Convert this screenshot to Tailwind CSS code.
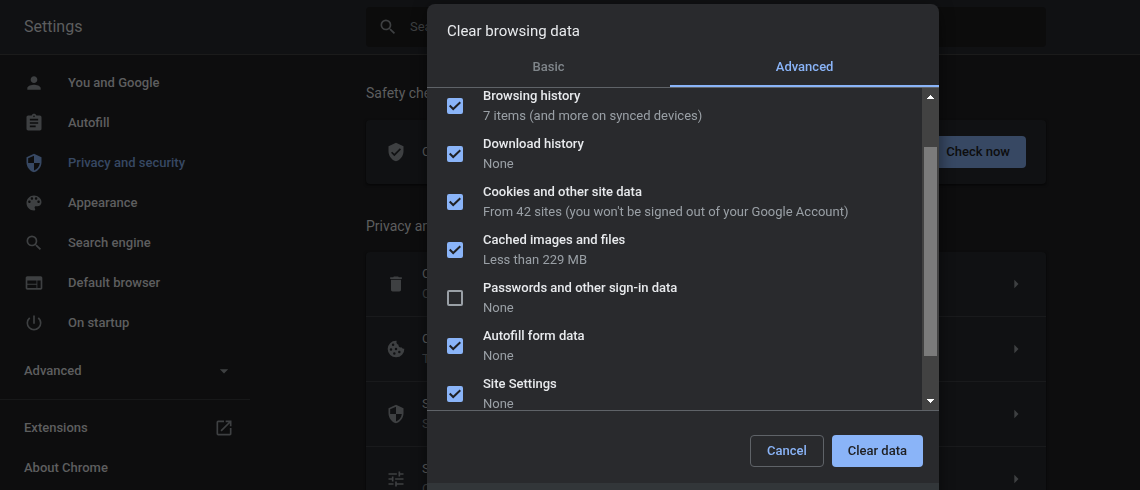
<!DOCTYPE html>
<html lang="en">
<head>
<meta charset="utf-8">
<title>Settings - Privacy and security</title>
<script src="https://cdn.jsdelivr.net/npm/@tailwindcss/browser@4"></script>
</head>
<body class="h-screen overflow-hidden bg-[#0d0d0e] font-['Roboto',sans-serif] text-[13px] leading-5 text-[#5d5e5f]">

<header class="flex h-[55px] border-b border-[#1b1b1b] bg-[#101113]">
  <h1 class="flex w-68 shrink-0 items-center pl-6 text-base">Settings</h1>
  <div class="flex flex-1 items-center justify-center">
    <label class="flex h-10 w-full max-w-[680px] items-center gap-3 rounded bg-[#0c0c0c] pl-3">
      <svg class="size-5 fill-[#3e4042]" viewBox="0 0 24 24"><path d="M15.5 14h-.79l-.28-.27A6.471 6.471 0 0 0 16 9.5 6.5 6.5 0 1 0 9.5 16c1.61 0 3.09-.59 4.23-1.57l.27.28v.79l5 4.99L20.49 19l-4.99-5zm-6 0C7.01 14 5 11.99 5 9.5S7.01 5 9.5 5 14 7.01 14 9.5 11.99 14 9.5 14z"/></svg>
      <input type="search" aria-label="Search settings" placeholder="Search settings" class="flex-1 bg-transparent outline-none placeholder:text-[#3e4042]">
    </label>
  </div>
</header>

<div class="flex">
  <nav class="w-68 shrink-0 pt-2 font-medium">
    <ul>
      <li><a href="#people" class="flex h-10 items-center gap-6 pl-6"><svg class="size-5 fill-[#3e4042]" viewBox="0 0 24 24"><path d="M12 12c2.21 0 4-1.79 4-4s-1.79-4-4-4-4 1.79-4 4 1.79 4 4 4zm0 2c-2.67 0-8 1.34-8 4v2h16v-2c0-2.66-5.33-4-8-4z"/></svg>You and Google</a></li>
      <li><a href="#autofill" class="flex h-10 items-center gap-6 pl-6"><svg class="size-5 fill-[#3e4042]" viewBox="0 0 24 24"><path d="M19 3h-4.18C14.4 1.84 13.3 1 12 1s-2.4.84-2.82 2H5c-1.1 0-2 .9-2 2v14c0 1.1.9 2 2 2h14c1.1 0 2-.9 2-2V5c0-1.1-.9-2-2-2zm-7 0c.55 0 1 .45 1 1s-.45 1-1 1-1-.45-1-1 .45-1 1-1zm2 14H7v-2h7v2zm3-4H7v-2h10v2zm0-4H7V7h10v2z"/></svg>Autofill</a></li>
      <li><a href="#privacy" aria-current="page" class="flex h-10 items-center gap-6 pl-6 text-[#374863]"><svg class="size-5 fill-[#374863]" viewBox="0 0 24 24"><path d="M12 1L3 5v6c0 5.55 3.84 10.74 9 12 5.16-1.26 9-6.45 9-12V5l-9-4zm0 10.99h7c-.53 4.12-3.28 7.79-7 8.94V12H5V6.3l7-3.11v8.8z"/></svg>Privacy and security</a></li>
      <li><a href="#appearance" class="flex h-10 items-center gap-6 pl-6"><svg class="size-5 fill-[#3e4042]" viewBox="0 0 24 24"><path d="M12 3c-4.97 0-9 4.03-9 9s4.03 9 9 9c.83 0 1.5-.67 1.5-1.5 0-.39-.15-.74-.39-1.01-.23-.26-.38-.61-.38-.99 0-.83.67-1.5 1.5-1.5H16c2.76 0 5-2.24 5-5 0-4.42-4.03-8-9-8zm-5.5 9c-.83 0-1.5-.67-1.5-1.5S5.67 9 6.500 9 8 9.670 8 10.500 7.330 12 6.500 12zm3-4C8.670 8 8 7.330 8 6.500S8.670 5 9.500 5s1.500.670 1.500 1.500S10.330 8 9.500 8zm5 0c-.83 0-1.500-.67-1.500-1.500S13.670 5 14.500 5s1.500.670 1.500 1.500S15.330 8 14.500 8zm3 4c-.83 0-1.500-.67-1.500-1.500S16.670 9 17.500 9s1.500.670 1.500 1.500-.67 1.500-1.500 1.500z"/></svg>Appearance</a></li>
      <li><a href="#search" class="flex h-10 items-center gap-6 pl-6"><svg class="size-5 fill-[#3e4042]" viewBox="0 0 24 24"><path d="M15.5 14h-.79l-.28-.27A6.471 6.471 0 0 0 16 9.5 6.5 6.5 0 1 0 9.5 16c1.61 0 3.09-.59 4.23-1.57l.27.28v.79l5 4.99L20.49 19l-4.99-5zm-6 0C7.01 14 5 11.99 5 9.5S7.01 5 9.5 5 14 7.01 14 9.5 11.99 14 9.5 14z"/></svg>Search engine</a></li>
      <li><a href="#default" class="flex h-10 items-center gap-6 pl-6"><svg class="size-5 fill-[#3e4042]" viewBox="0 0 24 24"><path d="M20 4H4c-1.1 0-1.990.9-1.990 2L2 18c0 1.100.9 2 2 2h16c1.100 0 2-.9 2-2V6c0-1.100-.9-2-2-2zm-5 14H4v-4h11v4zm0-5H4V9h11v4zm5 5h-4V9h4v9z"/></svg>Default browser</a></li>
      <li><a href="#startup" class="flex h-10 items-center gap-6 pl-6"><svg class="size-5 fill-[#3e4042]" viewBox="0 0 24 24"><path d="M13 3h-2v10h2V3zm4.830 2.170l-1.420 1.420A6.920 6.920 0 0 1 19 12c0 3.870-3.130 7-7 7s-7-3.130-7-7c0-2.190 1.010-4.140 2.580-5.420L6.170 5.170A8.932 8.932 0 0 0 3 12a9 9 0 0 0 18 0c0-2.740-1.230-5.180-3.170-6.830z"/></svg>On startup</a></li>
    </ul>
    <button type="button" class="mt-2 flex h-10 w-[234px] items-center justify-between pl-6 font-medium">Advanced<svg class="size-5 fill-[#3e4042]" viewBox="0 0 24 24"><path d="M7 10l5 5 5-5z"/></svg></button>
    <hr class="mt-2 mb-2 w-[250px] border-[#171819]">
    <a href="#extensions" class="flex h-10 w-[234px] items-center justify-between pl-6">Extensions<svg class="size-5 fill-[#3e4042]" viewBox="0 0 24 24"><path d="M19 19H5V5h7V3H5a2 2 0 0 0-2 2v14a2 2 0 0 0 2 2h14c1.100 0 2-.9 2-2v-7h-2v7zM14 3v2h3.590l-9.830 9.830 1.410 1.410L19 6.410V10h2V3h-7z"/></svg></a>
    <a href="#about" class="flex h-10 items-center pl-6">About Chrome</a>
  </nav>

  <main class="flex flex-1 justify-center">
    <div class="w-full max-w-[680px]">
      <h2 class="pt-7 pb-[17px] text-sm">Safety check</h2>
      <section class="flex h-16 items-center gap-4 rounded bg-[#101113] px-5 shadow-sm shadow-black/50">
        <svg class="size-5 fill-[#3e4042]" viewBox="0 0 24 24"><path d="M12 1L3 5v6c0 5.550 3.840 10.740 9 12 5.160-1.260 9-6.450 9-12V5l-9-4zm-2 16l-4-4 1.410-1.410L10 14.170l6.590-6.590L18 9l-8 8z"/></svg>
        <p class="flex-1">Chrome can help keep you safe from data breaches, bad extensions, and more</p>
        <button type="button" class="h-8 rounded bg-[#374863] px-4 font-medium text-[#0d0d0e]">Check now</button>
      </section>
      <h2 class="pt-8 pb-4 text-sm">Privacy and security</h2>
      <ul class="divide-y divide-[#191a1c] rounded bg-[#101113] shadow-sm shadow-black/50">
        <li><a href="#clear" class="flex h-16 items-center gap-4 px-5"><svg class="size-5 fill-[#3e4042]" viewBox="0 0 24 24"><path d="M6 19c0 1.100.9 2 2 2h8c1.100 0 2-.9 2-2V7H6v12zM19 4h-3.500l-1-1h-5l-1 1H5v2h14V4z"/></svg><span class="flex-1">Clear browsing data<span class="block text-[#3e4042]">Clear history, cookies, cache, and more</span></span><svg class="size-5 fill-[#3e4042]" viewBox="0 0 24 24"><path d="M10 17l5-5-5-5z"/></svg></a></li>
        <li><a href="#cookies" class="flex h-16 items-center gap-4 px-5"><svg class="size-5 fill-[#3e4042]" viewBox="0 0 24 24"><path fill-rule="evenodd" d="M12 2a10 10 0 1 0 10 9.600c-1.500.5-3-.2-3.500-1.600-2.300.4-3.800-1-3.500-3.100-2-.5-3-2.300-2.200-4.800zM8.500 5.500a1.500 1.500 0 1 1 0 3 1.500 1.500 0 0 1 0-3zM6 11a1.500 1.500 0 1 1 0 3 1.500 1.500 0 0 1 0-3zm6-.5a1.500 1.500 0 1 1 0 3 1.500 1.500 0 0 1 0-3zM10 16a1.500 1.500 0 1 1 0 3 1.500 1.500 0 0 1 0-3zm6-2a1.500 1.500 0 1 1 0 3 1.500 1.500 0 0 1 0-3z"/></svg><span class="flex-1">Cookies and other site data<span class="block text-[#3e4042]">Third-party cookies are blocked in Incognito mode</span></span><svg class="size-5 fill-[#3e4042]" viewBox="0 0 24 24"><path d="M10 17l5-5-5-5z"/></svg></a></li>
        <li><a href="#security" class="flex h-16 items-center gap-4 px-5"><svg class="size-5 fill-[#3e4042]" viewBox="0 0 24 24"><path d="M12 1L3 5v6c0 5.550 3.840 10.740 9 12 5.160-1.260 9-6.450 9-12V5l-9-4zm0 10.990h7c-.53 4.120-3.280 7.790-7 8.940V12H5V6.300l7-3.110v8.800z"/></svg><span class="flex-1">Security<span class="block text-[#3e4042]">Safe Browsing and other security settings</span></span><svg class="size-5 fill-[#3e4042]" viewBox="0 0 24 24"><path d="M10 17l5-5-5-5z"/></svg></a></li>
        <li><a href="#site" class="flex h-16 items-center gap-4 px-5"><svg class="size-5 fill-[#3e4042]" viewBox="0 0 24 24"><path d="M3 17v2h6v-2H3zM3 5v2h10V5H3zm10 16v-2h8v-2h-8v-2h-2v6h2zM7 9v2H3v2h4v2h2V9H7zm14 4v-2H11v2h10zm-6-4h2V7h4V5h-4V3h-2v6z"/></svg><span class="flex-1">Site Settings<span class="block text-[#3e4042]">Controls what information sites can use and show</span></span><svg class="size-5 fill-[#3e4042]" viewBox="0 0 24 24"><path d="M10 17l5-5-5-5z"/></svg></a></li>
      </ul>
    </div>
  </main>
</div>

<div class="fixed inset-0 flex items-start justify-center overflow-hidden pt-1 pl-[226px]">
  <div role="dialog" aria-modal="true" aria-labelledby="dialog-title" class="w-full max-w-lg overflow-hidden rounded-lg bg-[#292a2d] shadow-[0_0_16px_rgba(0,0,0,0.3),0_16px_16px_rgba(0,0,0,0.24)]">
    <h2 id="dialog-title" class="flex h-11 items-end px-5 pb-[5px] text-[15px] leading-6 text-[#e8eaed]">Clear browsing data</h2>
    <div role="tablist" class="flex h-10 border-b border-[#5f6368] font-medium">
      <button type="button" role="tab" aria-selected="false" class="flex-auto border-b-2 border-transparent text-[#80868b]">Basic</button>
      <button type="button" role="tab" aria-selected="true" class="flex-auto border-b-2 border-[#8ab4f8] text-[#8ab4f8]">Advanced</button>
    </div>
    <div class="flex h-[322px]">
      <div class="flex-1 overflow-hidden px-5 text-[#9aa0a6]">
        <ul class="-mt-1.5">
          <li><label class="flex h-12 items-center gap-5"><span class="grid"><input type="checkbox" checked class="peer col-start-1 row-start-1 size-4 appearance-none rounded-xs border-2 border-[#9aa0a6] checked:border-[#8ab4f8] checked:bg-[#8ab4f8]"><svg class="pointer-events-none invisible col-start-1 row-start-1 size-4 fill-none stroke-[#202124] stroke-2 peer-checked:visible" viewBox="0 0 16 16"><path d="M2.700 7.500L6.200 11L13.300 4.300"/></svg></span><span><span class="block font-medium text-[#e8eaed]">Browsing history</span>7 items (and more on synced devices)</span></label></li>
          <li><label class="flex h-12 items-center gap-5"><span class="grid"><input type="checkbox" checked class="peer col-start-1 row-start-1 size-4 appearance-none rounded-xs border-2 border-[#9aa0a6] checked:border-[#8ab4f8] checked:bg-[#8ab4f8]"><svg class="pointer-events-none invisible col-start-1 row-start-1 size-4 fill-none stroke-[#202124] stroke-2 peer-checked:visible" viewBox="0 0 16 16"><path d="M2.700 7.500L6.200 11L13.300 4.300"/></svg></span><span><span class="block font-medium text-[#e8eaed]">Download history</span>None</span></label></li>
          <li><label class="flex h-12 items-center gap-5"><span class="grid"><input type="checkbox" checked class="peer col-start-1 row-start-1 size-4 appearance-none rounded-xs border-2 border-[#9aa0a6] checked:border-[#8ab4f8] checked:bg-[#8ab4f8]"><svg class="pointer-events-none invisible col-start-1 row-start-1 size-4 fill-none stroke-[#202124] stroke-2 peer-checked:visible" viewBox="0 0 16 16"><path d="M2.700 7.500L6.200 11L13.300 4.300"/></svg></span><span><span class="block font-medium text-[#e8eaed]">Cookies and other site data</span>From 42 sites (you won't be signed out of your Google Account)</span></label></li>
          <li><label class="flex h-12 items-center gap-5"><span class="grid"><input type="checkbox" checked class="peer col-start-1 row-start-1 size-4 appearance-none rounded-xs border-2 border-[#9aa0a6] checked:border-[#8ab4f8] checked:bg-[#8ab4f8]"><svg class="pointer-events-none invisible col-start-1 row-start-1 size-4 fill-none stroke-[#202124] stroke-2 peer-checked:visible" viewBox="0 0 16 16"><path d="M2.700 7.500L6.200 11L13.300 4.300"/></svg></span><span><span class="block font-medium text-[#e8eaed]">Cached images and files</span>Less than 229 MB</span></label></li>
          <li><label class="flex h-12 items-center gap-5"><span class="grid"><input type="checkbox" class="peer col-start-1 row-start-1 size-4 appearance-none rounded-xs border-2 border-[#9aa0a6] checked:border-[#8ab4f8] checked:bg-[#8ab4f8]"><svg class="pointer-events-none invisible col-start-1 row-start-1 size-4 fill-none stroke-[#202124] stroke-2 peer-checked:visible" viewBox="0 0 16 16"><path d="M2.700 7.500L6.200 11L13.300 4.300"/></svg></span><span><span class="block font-medium text-[#e8eaed]">Passwords and other sign-in data</span>None</span></label></li>
          <li><label class="flex h-12 items-center gap-5"><span class="grid"><input type="checkbox" checked class="peer col-start-1 row-start-1 size-4 appearance-none rounded-xs border-2 border-[#9aa0a6] checked:border-[#8ab4f8] checked:bg-[#8ab4f8]"><svg class="pointer-events-none invisible col-start-1 row-start-1 size-4 fill-none stroke-[#202124] stroke-2 peer-checked:visible" viewBox="0 0 16 16"><path d="M2.700 7.500L6.200 11L13.300 4.300"/></svg></span><span><span class="block font-medium text-[#e8eaed]">Autofill form data</span>None</span></label></li>
          <li><label class="flex h-12 items-center gap-5"><span class="grid"><input type="checkbox" checked class="peer col-start-1 row-start-1 size-4 appearance-none rounded-xs border-2 border-[#9aa0a6] checked:border-[#8ab4f8] checked:bg-[#8ab4f8]"><svg class="pointer-events-none invisible col-start-1 row-start-1 size-4 fill-none stroke-[#202124] stroke-2 peer-checked:visible" viewBox="0 0 16 16"><path d="M2.700 7.500L6.200 11L13.300 4.300"/></svg></span><span><span class="block font-medium text-[#e8eaed]">Site Settings</span>None</span></label></li>
        </ul>
      </div>
      <div aria-hidden="true" class="flex w-[17px] shrink-0 flex-col items-center bg-[#424242]">
        <svg class="size-[17px] fill-white" viewBox="0 0 17 17" shape-rendering="crispEdges"><path d="M8 7h1v1h1v1h1v1h1v1H5v-1h1V9h1V8h1z"/></svg>
        <div class="mt-[42px] h-[209px] w-[13px] bg-[#7b7b7b]"></div>
        <svg class="mt-auto size-[17px] fill-white" viewBox="0 0 17 17" shape-rendering="crispEdges"><path d="M5 6h7v1h-1v1h-1v1H9v1H8V9H7V8H6V7H5z"/></svg>
      </div>
    </div>
    <div class="flex justify-end gap-2 border-t border-[#5f6368] px-4 pt-6 pb-4 font-medium">
      <button type="button" class="h-8 rounded border border-[#5f6368] px-4 text-[#8ab4f8]">Cancel</button>
      <button type="button" class="h-8 rounded bg-[#8ab4f8] px-4 text-[#202124]">Clear data</button>
    </div>
    <div class="h-12 bg-[#323639]"></div>
  </div>
</div>
</body>
</html>
